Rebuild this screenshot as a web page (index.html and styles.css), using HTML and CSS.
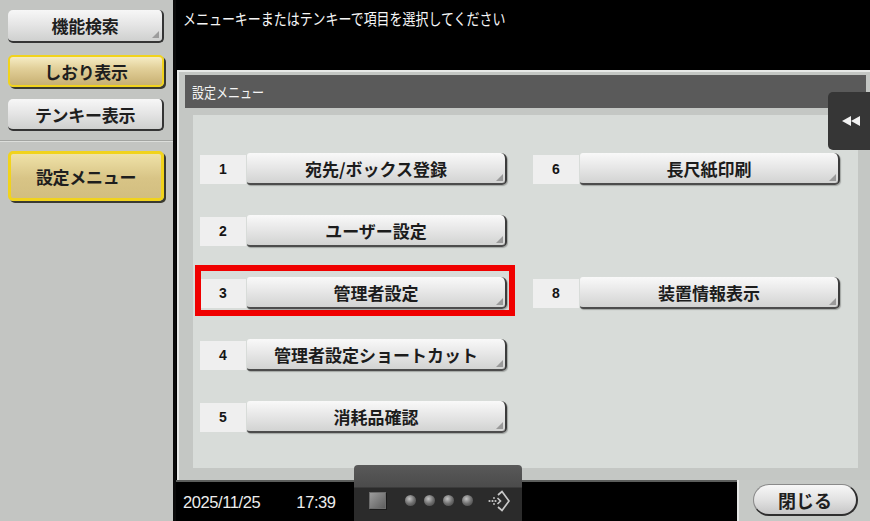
FILE: index.html
```html
<!DOCTYPE html>
<html lang="ja">
<head>
<meta charset="utf-8">
<title>設定メニュー</title>
<link rel="stylesheet" href="styles.css">
</head>
<body>
<div class="screen">
  <aside class="sidebar">
    <div class="side-top">
      <div class="sbtn corner">機能検索</div>
      <div class="sbtn gold">しおり表示</div>
      <div class="sbtn">テンキー表示</div>
    </div>
    <div class="side-bottom">
      <div class="sbtn gold big">設定メニュー</div>
    </div>
  </aside>
  <main class="main">
    <div class="prompt"><span class="cond">メニューキーまたはテンキーで項目を選択してください</span></div>
    <section class="panel">
      <div class="panel-head"><span class="cond">設定メニュー</span></div>
      <div class="panel-body">
        <div class="menu">
          <div class="item r1 c1"><span class="num">1</span><span class="mbtn">宛先/ボックス登録</span></div>
          <div class="item r2 c1"><span class="num">2</span><span class="mbtn">ユーザー設定</span></div>
          <div class="item r3 c1 marked"><span class="num">3</span><span class="mbtn">管理者設定</span></div>
          <div class="item r4 c1"><span class="num">4</span><span class="mbtn">管理者設定ショートカット</span></div>
          <div class="item r5 c1"><span class="num">5</span><span class="mbtn">消耗品確認</span></div>
          <div class="item r1 c2"><span class="num">6</span><span class="mbtn">長尺紙印刷</span></div>
          <div class="item r3 c2"><span class="num">8</span><span class="mbtn">装置情報表示</span></div>
        </div>
      </div>
      <div class="back-tab">
        <svg width="18" height="10" viewBox="0 0 18 10"><polygon points="9,0 9,10 0,5" fill="#f2f2f2"/><polygon points="18,0 18,10 9,5" fill="#f2f2f2"/></svg>
      </div>
    </section>
    <footer class="status">
      <div class="clock"><span class="date">2025/11/25</span><span class="time">17:39</span></div>
      <div class="close-area"><div class="close">閉じる</div></div>
      <div class="tray">
        <span class="sq"></span>
        <span class="dots"><i></i><i></i><i></i><i></i></span>
        <svg class="enter" width="22" height="22" viewBox="0 0 22 22">
          <circle cx="1.5" cy="11" r="1.1" fill="#c8c8c8"/>
          <circle cx="4.5" cy="11" r="1.1" fill="#c8c8c8"/>
          <circle cx="7.5" cy="11" r="1.1" fill="#c8c8c8"/>
          <circle cx="6" cy="8" r="0.9" fill="#c8c8c8"/>
          <circle cx="6" cy="14" r="0.9" fill="#c8c8c8"/>
          <path d="M9.5,8 L12.5,11 L9.5,14" fill="none" stroke="#c8c8c8" stroke-width="1.6"/>
          <path d="M10,5 L14,1.5 L21,11 L14,20.5 L10,17" fill="none" stroke="#c8c8c8" stroke-width="1.7"/>
        </svg>
      </div>
    </footer>
  </main>
</div>
</body>
</html>
```

FILE: styles.css
```css
* { box-sizing: border-box; }
html, body { margin: 0; padding: 0; }
body {
  width: 870px;
  height: 521px;
  overflow: hidden;
  background: #000;
  font-family: "Noto Sans CJK JP", "Noto Sans", sans-serif;
}
.screen {
  display: flex;
  width: 870px;
  height: 521px;
}
.cond {
  display: inline-block;
  white-space: nowrap;
  transform-origin: 0 50%;
}

/* ---------- sidebar ---------- */
.sidebar {
  width: 176px;
  flex: none;
  background: #c3c5c2;
  border-right: 3px solid #0a0a0a;
  display: flex;
  flex-direction: column;
}
.side-top {
  height: 141px;
  padding: 10px 0 0 8px;
  display: flex;
  flex-direction: column;
  gap: 12px;
  border-bottom: 1px solid #a3a5a2;
}
.side-bottom {
  flex: 1;
  border-top: 1px solid #dcdedb;
  padding: 9px 0 0 8px;
}
.sbtn {
  position: relative;
  width: 156px;
  height: 32px;
  display: flex;
  align-items: center;
  justify-content: center;
  font-size: 17px;
  font-weight: 700;
  color: #1e1e1e;
  letter-spacing: -0.3px;
  border-radius: 5px;
  background: linear-gradient(#f7f7f7, #e6e6e6 45%, #cfd0cf);
  border-right: 2px solid #343434;
  border-bottom: 2px solid #343434;
}
.sbtn.corner { height: 33px; }
.sbtn.corner::after {
  content: "";
  position: absolute;
  right: 3px;
  bottom: 3px;
  border-style: solid;
  border-width: 0 0 7px 7px;
  border-color: transparent transparent #9c9c9c transparent;
}
.sbtn.gold {
  border: 2px solid #f1d31c;
  background: linear-gradient(#f6ecc4, #e2d09a 40%, #c8b072);
  box-shadow: 2px 2px 0 #3a3a30;
}
.sbtn.big {
  height: 50px;
  border-width: 3px;
  background: linear-gradient(#efe2a8, #d8c486 55%, #d2be80);
}

/* ---------- main ---------- */
.main {
  flex: 1;
  display: flex;
  flex-direction: column;
  background: #000;
  min-width: 0;
}
.prompt {
  height: 70px;
  padding: 7px 0 0 7px;
  color: #f6f6f6;
  font-size: 16px;
  line-height: 22px;
}
.prompt .cond { transform: scaleX(0.81); }
.panel {
  position: relative;
  height: 410px;
  margin-left: 1px;
  background: #c4c7c4;
  border-top: 2px solid #e8eae8;
  border-left: 2px solid #e8eae8;
  padding: 3px 4px 12px 6px;
  display: flex;
  flex-direction: column;
}
.panel-head {
  height: 33px;
  flex: none;
  background: #5a5a5a;
  color: #f4f4f4;
  font-size: 15px;
  line-height: 33px;
  padding-left: 7px;
}
.panel-head .cond { transform: scaleX(0.8); }
.panel-body {
  flex: 1;
  margin: 7px 8px 0 8px;
  background: #d8dcd9;
  padding: 38px 0 0 7px;
}
.menu {
  display: grid;
  grid-template-columns: 307px 307px;
  grid-template-rows: repeat(5, 32px);
  column-gap: 26px;
  row-gap: 30px;
}
.r1 { grid-row: 1; } .r2 { grid-row: 2; } .r3 { grid-row: 3; } .r4 { grid-row: 4; } .r5 { grid-row: 5; }
.c1 { grid-column: 1; } .c2 { grid-column: 2; }
.item {
  position: relative;
  display: flex;
  align-items: center;
  height: 32px;
}
.num {
  width: 46px;
  height: 29px;
  margin-right: 1px;
  background: #efefef;
  display: flex;
  align-items: center;
  justify-content: center;
  font-family: "Liberation Sans", Arial, sans-serif;
  font-weight: 700;
  font-size: 14px;
  color: #151515;
}
.mbtn {
  position: relative;
  width: 260px;
  height: 32px;
  display: flex;
  align-items: center;
  justify-content: center;
  font-size: 17px;
  font-weight: 700;
  color: #1c1c1c;
  border-radius: 3px 6px 5px 3px;
  background: linear-gradient(#f9f9f9, #e8e8e8 45%, #d2d3d2);
  border-right: 2px solid #3c3c3c;
  border-bottom: 2px solid #4c4c4c;
  box-shadow: 1px 1px 1px rgba(0,0,0,0.25);
}
.mbtn::after {
  content: "";
  position: absolute;
  right: 2px;
  bottom: 2px;
  border-style: solid;
  border-width: 0 0 7px 7px;
  border-color: transparent transparent #9a9a9a transparent;
}
.item.marked::before {
  content: "";
  position: absolute;
  left: -5px;
  right: -8px;
  top: -12px;
  bottom: -7px;
  border: 6px solid #f00000;
}
.back-tab {
  position: absolute;
  top: 20px;
  right: 0;
  width: 42px;
  height: 58px;
  background: #363636;
  border-radius: 5px 0 0 5px;
  display: flex;
  align-items: center;
  justify-content: center;
  padding-left: 4px;
}

/* ---------- status bar ---------- */
.status {
  position: relative;
  height: 41px;
  display: flex;
}
.clock {
  flex: 1;
  display: flex;
  align-items: center;
  padding: 4px 0 0 7px;
  background: #000;
  box-shadow: inset 0 2px 0 #5c5e5c;
  color: #ededed;
  font-family: "Liberation Sans", Arial, sans-serif;
  font-size: 16.5px;
  letter-spacing: -0.4px;
}
.time { margin-left: 36px; }
.close-area {
  width: 133px;
  flex: none;
  background: #c6c9c6;
  border-left: 2px solid #e4e6e4;
  padding: 4px 0 0 14px;
}
.close {
  width: 105px;
  height: 32px;
  border-radius: 16px;
  background: linear-gradient(#f8f8f8, #e2e2e2 50%, #c6c6c6);
  border: 1px solid #8a8a8a;
  border-right: 2px solid #2e2e2e;
  border-bottom: 2px solid #2e2e2e;
  display: flex;
  align-items: center;
  justify-content: center;
  font-size: 18px;
  font-weight: 700;
  color: #1e1e1e;
}
.tray {
  position: absolute;
  left: 178px;
  bottom: 0;
  width: 168px;
  height: 56px;
  border-radius: 4px 4px 0 0;
  background: linear-gradient(#595959, #4b4b4b 22px, #2b2b2b 23px, #2b2b2b);
  display: flex;
  align-items: flex-start;
  padding: 27px 0 0 15px;
}
.sq {
  width: 17px;
  height: 17px;
  background: linear-gradient(135deg, #9c9c9c, #5e5e5e);
  border: 1px solid #6c6c6c;
  box-shadow: 1px 1px 0 #1a1a1a;
}
.dots {
  display: flex;
  gap: 8px;
  margin: 3px 0 0 19px;
}
.dots i {
  width: 11px;
  height: 11px;
  border-radius: 50%;
  background: radial-gradient(circle at 40% 35%, #c4c4c4, #707070 50%, #3a3a3a);
}
.enter {
  margin: -2px 0 0 15px;
}
```
